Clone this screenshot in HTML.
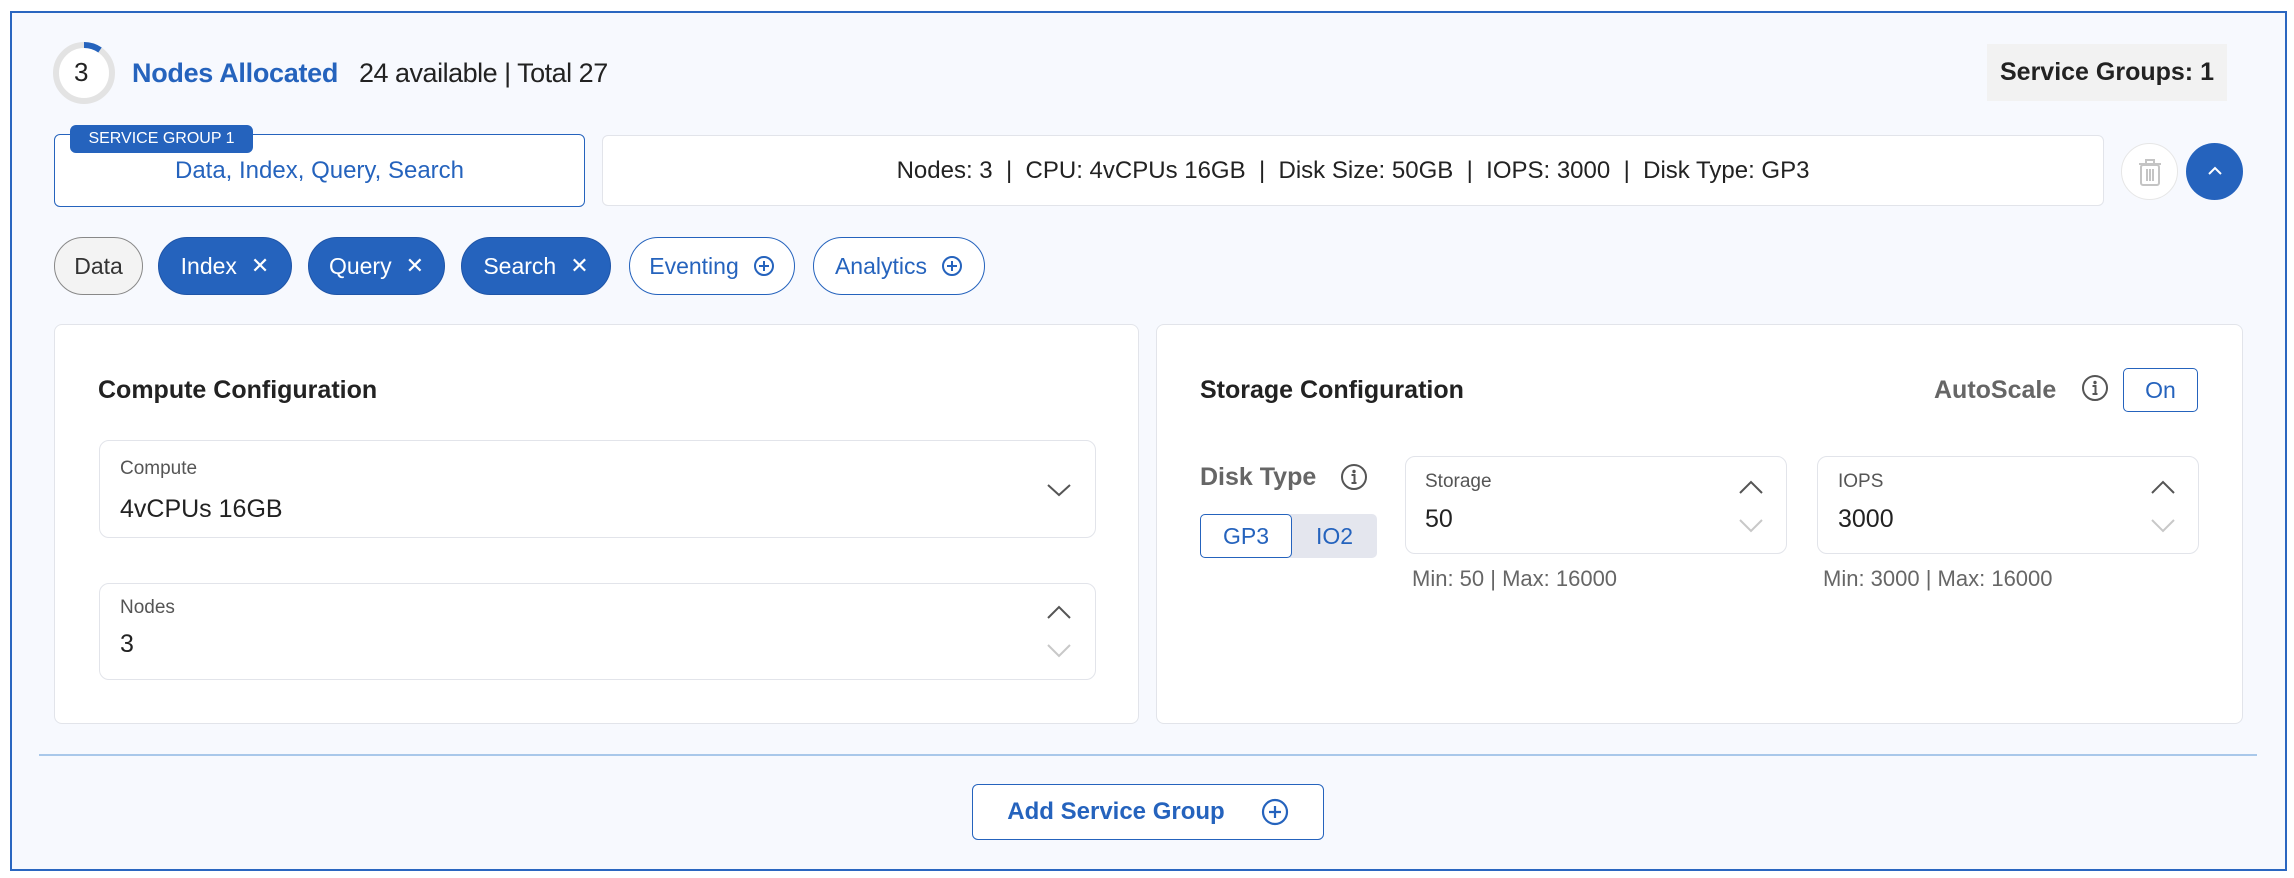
<!DOCTYPE html>
<html><head><meta charset="utf-8"><style>
*{box-sizing:border-box;margin:0;padding:0}
body{width:2294px;height:878px;background:#fff;font-family:"Liberation Sans",sans-serif;position:relative;overflow:hidden;color:#222}
.a{position:absolute}
.frame{left:10px;top:11px;width:2277px;height:860px;border:2px solid #2a66c0;background:#f7f9fe}
.blue{color:#2563bd}
.chip{position:absolute;top:237px;height:58px;border-radius:29px;font-size:23px;display:flex;align-items:center;justify-content:center;gap:14px}
.chip.f{background:#2563bd;color:#fff;border:1px solid #1f55a8}
.chip.o{background:#fff;color:#2563bd;border:1.5px solid #2563bd}
.card{background:#fff;border:1.5px solid #e2e4ea;border-radius:8px}
.field{background:#fff;border:1.5px solid #e2e4ea;border-radius:10px}
.lbl{font-size:19px;color:#555}
.val{font-size:25px;color:#222}
.h{font-size:25px;font-weight:bold;color:#222}
</style></head><body>
<div class="a frame"></div>

<svg class="a" style="left:52px;top:41px" width="64" height="64" viewBox="0 0 64 64"><circle cx="32" cy="32" r="28" fill="#fff" stroke="#e3e3e3" stroke-width="6"/><path d="M32 4 A28 28 0 0 1 48 9" fill="none" stroke="#2563bd" stroke-width="6"/></svg>
<div class="a" style="left:74px;top:57px;font-size:26px;color:#222">3</div>
<div class="a" style="left:132px;top:58px;font-size:27px;font-weight:bold;color:#2563bd;letter-spacing:-0.3px">Nodes Allocated</div>
<div class="a" style="left:359px;top:58px;font-size:27px;color:#222;letter-spacing:-0.5px">24 available | Total 27</div>

<div class="a" style="left:1987px;top:44px;width:240px;height:57px;background:#f2f2f2;font-size:25px;display:flex;align-items:center;justify-content:center;color:#222"><span style="font-weight:bold">Service Groups: 1</span></div>

<div class="a" style="left:54px;top:134px;width:531px;height:73px;border:1.5px solid #2563bd;border-radius:6px;background:#fff"></div>
<div class="a" style="left:70px;top:125px;width:183px;height:28px;background:#2563bd;border-radius:6px;color:#fff;font-size:16px;display:flex;align-items:center;justify-content:center">SERVICE GROUP 1</div>
<div class="a blue" style="left:54px;top:157px;width:531px;text-align:center;font-size:24px">Data, Index, Query, Search</div>

<div class="a" style="left:602px;top:135px;width:1502px;height:71px;border:1.5px solid #e2e4ea;border-radius:6px;background:#fff;display:flex;align-items:center;justify-content:center;font-size:24px;color:#222;white-space:pre">Nodes: 3  |  CPU: 4vCPUs 16GB  |  Disk Size: 50GB  |  IOPS: 3000  |  Disk Type: GP3</div>

<div class="a" style="left:2121px;top:143px;width:57px;height:57px;border-radius:50%;border:1.5px solid #e6e6e6;background:#fff"></div>
<svg class="a" style="left:2136px;top:157px" width="28" height="30" viewBox="0 0 28 30"><rect x="5" y="8" width="18" height="20" rx="2" fill="none" stroke="#c4c4c4" stroke-width="2"/><path d="M3 7h22M10 7V3h8v4M11 12v12M14 12v12M17 12v12" stroke="#c4c4c4" stroke-width="2" fill="none"/></svg>
<div class="a" style="left:2186px;top:143px;width:57px;height:57px;border-radius:50%;background:#2563bd"></div>
<svg class="a" style="left:2204px;top:162px" width="22" height="18" viewBox="0 0 22 18"><path d="M5 12 L11 6 L17 12" stroke="#fff" stroke-width="2" fill="none"/></svg>

<div class="chip" style="left:54px;width:89px;background:#f3f3f3;border:1.5px solid #888;color:#333">Data</div>
<div class="chip f" style="left:158px;width:134px">Index <span style="font-size:22px">✕</span></div>
<div class="chip f" style="left:308px;width:137px">Query <span style="font-size:22px">✕</span></div>
<div class="chip f" style="left:461px;width:150px">Search <span style="font-size:22px">✕</span></div>
<div class="chip o" style="left:629px;width:166px">Eventing <svg width="22" height="22" viewBox="0 0 22 22"><circle cx="11" cy="11" r="9" fill="none" stroke="#2563bd" stroke-width="2"/><path d="M11 6v10M6 11h10" stroke="#2563bd" stroke-width="2"/></svg></div>
<div class="chip o" style="left:813px;width:172px">Analytics <svg width="22" height="22" viewBox="0 0 22 22"><circle cx="11" cy="11" r="9" fill="none" stroke="#2563bd" stroke-width="2"/><path d="M11 6v10M6 11h10" stroke="#2563bd" stroke-width="2"/></svg></div>

<!-- compute card -->
<div class="a card" style="left:54px;top:324px;width:1085px;height:400px"></div>
<div class="a h" style="left:98px;top:376px">Compute Configuration</div>
<div class="a field" style="left:99px;top:440px;width:997px;height:98px"></div>
<div class="a lbl" style="left:120px;top:458px">Compute</div>
<div class="a val" style="left:120px;top:495px">4vCPUs 16GB</div>
<svg class="a" style="left:1046px;top:480px" width="26" height="20" viewBox="0 0 26 20"><path d="M2 5 L13 15 L24 5" stroke="#555" stroke-width="2" fill="none"/></svg>
<div class="a field" style="left:99px;top:583px;width:997px;height:97px"></div>
<div class="a lbl" style="left:120px;top:597px">Nodes</div>
<div class="a val" style="left:120px;top:630px">3</div>
<svg class="a" style="left:1046px;top:604px" width="26" height="18" viewBox="0 0 26 18"><path d="M2 14 L13 3 L24 14" stroke="#555" stroke-width="2" fill="none"/></svg>
<svg class="a" style="left:1046px;top:641px" width="26" height="18" viewBox="0 0 26 18"><path d="M2 4 L13 15 L24 4" stroke="#c8c8c8" stroke-width="2" fill="none"/></svg>

<!-- storage card -->
<div class="a card" style="left:1156px;top:324px;width:1087px;height:400px"></div>
<div class="a h" style="left:1200px;top:376px">Storage Configuration</div>
<div class="a" style="left:1934px;top:376px;font-size:25px;font-weight:bold;color:#666">AutoScale</div>
<svg class="a" style="left:2081px;top:374px" width="28" height="28" viewBox="0 0 28 28"><circle cx="14" cy="14" r="12" fill="none" stroke="#555" stroke-width="2"/><circle cx="14" cy="8.5" r="1.7" fill="#555"/><path d="M11.5 12h3v8M11.5 20h5" stroke="#555" stroke-width="2" fill="none"/></svg>
<div class="a" style="left:2123px;top:368px;width:75px;height:44px;border:1.5px solid #2563bd;border-radius:5px;background:#fff;color:#2563bd;font-size:23px;display:flex;align-items:center;justify-content:center">On</div>

<div class="a" style="left:1200px;top:463px;font-size:25px;font-weight:bold;color:#666">Disk Type</div>
<svg class="a" style="left:1340px;top:463px" width="28" height="28" viewBox="0 0 28 28"><circle cx="14" cy="14" r="12" fill="none" stroke="#555" stroke-width="2"/><circle cx="14" cy="8.5" r="1.7" fill="#555"/><path d="M11.5 12h3v8M11.5 20h5" stroke="#555" stroke-width="2" fill="none"/></svg>
<div class="a" style="left:1200px;top:514px;width:177px;height:44px;background:#e4e6ee;border-radius:5px"></div>
<div class="a" style="left:1200px;top:514px;width:92px;height:44px;border:1.5px solid #2563bd;border-radius:5px;background:#fff;color:#2563bd;font-size:23px;display:flex;align-items:center;justify-content:center">GP3</div>
<div class="a" style="left:1292px;top:514px;width:85px;height:44px;color:#2563bd;font-size:23px;display:flex;align-items:center;justify-content:center">IO2</div>

<div class="a field" style="left:1405px;top:456px;width:382px;height:98px"></div>
<div class="a lbl" style="left:1425px;top:471px">Storage</div>
<div class="a val" style="left:1425px;top:505px">50</div>
<svg class="a" style="left:1738px;top:479px" width="26" height="18" viewBox="0 0 26 18"><path d="M2 14 L13 3 L24 14" stroke="#555" stroke-width="2" fill="none"/></svg>
<svg class="a" style="left:1738px;top:516px" width="26" height="18" viewBox="0 0 26 18"><path d="M2 4 L13 15 L24 4" stroke="#c8c8c8" stroke-width="2" fill="none"/></svg>
<div class="a" style="left:1412px;top:566px;font-size:22px;color:#666">Min: 50 | Max: 16000</div>

<div class="a field" style="left:1817px;top:456px;width:382px;height:98px"></div>
<div class="a lbl" style="left:1838px;top:471px">IOPS</div>
<div class="a val" style="left:1838px;top:505px">3000</div>
<svg class="a" style="left:2150px;top:479px" width="26" height="18" viewBox="0 0 26 18"><path d="M2 14 L13 3 L24 14" stroke="#555" stroke-width="2" fill="none"/></svg>
<svg class="a" style="left:2150px;top:516px" width="26" height="18" viewBox="0 0 26 18"><path d="M2 4 L13 15 L24 4" stroke="#c8c8c8" stroke-width="2" fill="none"/></svg>
<div class="a" style="left:1823px;top:566px;font-size:22px;color:#666">Min: 3000 | Max: 16000</div>

<div class="a" style="left:39px;top:754px;width:2218px;height:1.5px;background:#a9c8ea"></div>

<div class="a" style="left:972px;top:784px;width:352px;height:56px;border:1.5px solid #2563bd;border-radius:6px;background:#fff;color:#2563bd;font-size:24px;display:flex;align-items:center;justify-content:center;gap:36px"><span style="font-weight:600">Add Service Group</span><svg width="28" height="28" viewBox="0 0 28 28"><circle cx="14" cy="14" r="12" fill="none" stroke="#2563bd" stroke-width="2.2"/><path d="M14 8v12M8 14h12" stroke="#2563bd" stroke-width="2.2"/></svg></div>
</body></html>
